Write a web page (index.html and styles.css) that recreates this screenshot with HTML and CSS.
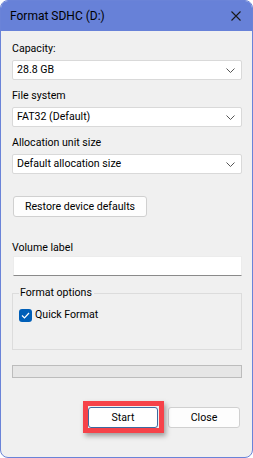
FILE: index.html
```html
<!DOCTYPE html>
<html>
<head>
<meta charset="utf-8">
<link rel="stylesheet" href="styles.css">
</head>
<body>
<div class="window">
  <div class="titlebar">
    <span class="title">Format SDHC (D:)</span>
    <svg class="close-x" width="10" height="10" viewBox="0 0 10 10"><path d="M0.5 0.5 L9.5 9.5 M9.5 0.5 L0.5 9.5" stroke="#1a1a1a" stroke-width="1.1" fill="none"/></svg>
  </div>
  <div class="content">
    <div class="label">Capacity:</div>
    <div class="combo"><span>28.8 GB</span><svg class="chev" width="9" height="5" viewBox="0 0 9 5"><path d="M0.5 0.5 L4.5 4.5 L8.5 0.5" stroke="#555" stroke-width="1" fill="none"/></svg></div>
    <div class="label gap">File system</div>
    <div class="combo"><span>FAT32 (Default)</span><svg class="chev" width="9" height="5" viewBox="0 0 9 5"><path d="M0.5 0.5 L4.5 4.5 L8.5 0.5" stroke="#555" stroke-width="1" fill="none"/></svg></div>
    <div class="label gap">Allocation unit size</div>
    <div class="combo"><span>Default allocation size</span><svg class="chev" width="9" height="5" viewBox="0 0 9 5"><path d="M0.5 0.5 L4.5 4.5 L8.5 0.5" stroke="#555" stroke-width="1" fill="none"/></svg></div>
    <div class="row"><button class="btn restore">Restore device defaults</button></div>
    <div class="label vol">Volume label</div>
    <div class="input"></div>
    <fieldset class="group">
      <legend>Format options</legend>
      <label class="check"><span class="box"><svg width="9" height="7" viewBox="0 0 9 7"><path d="M1 3.5 L3.5 6 L8 1" stroke="#fff" stroke-width="1.2" fill="none"/></svg></span>Quick Format</label>
    </fieldset>
    <div class="progress"></div>
    <div class="actions">
      <div class="hl-wrap"><button class="btn start">Start</button><div class="highlight"></div></div>
      <button class="btn close">Close</button>
    </div>
  </div>
</div>
</body>
</html>
```
FILE: styles.css
```css
* { box-sizing: border-box; }
html, body { margin: 0; padding: 0; background: #ffffff; }
body {
  font-family: Roboto, "Noto Sans", "Liberation Sans", sans-serif;
  font-size: 10.6px;
  color: #000;
}
.window {
  width: 253px;
  height: 458px;
  border: 1px solid #6a83d8;
  border-radius: 8px;
  overflow: hidden;
  background: #f0f0f0;
  display: flex;
  flex-direction: column;
}
.titlebar {
  height: 30px;
  background: #6781d8;
  display: flex;
  align-items: center;
  justify-content: space-between;
  padding: 0 11px 0 9px;
  flex: none;
}
.title { font-size: 12px; color: #000; line-height: 16px; margin-top: -1px; }
.close-x { display: block; margin-top: -1px; }
.content {
  padding: 8px 10px 0 11px;
  display: flex;
  flex-direction: column;
  flex: 1;
}
.label { line-height: 16px; height: 18px; padding-top: 2px; margin-bottom: 3px; }
.label.gap { margin-top: 6px; }
.label.vol { margin-top: 21px; margin-bottom: 0; }
.combo {
  height: 20px;
  background: #fff;
  border: 1px solid #d9d9d9;
  border-radius: 2px;
  display: flex;
  align-items: center;
  justify-content: space-between;
  padding: 0 6px 0 4px;
  line-height: 16px;
}
.chev { display: block; }
.row { display: flex; margin-top: 22px; }
.btn {
  font-family: inherit;
  font-size: 10.6px;
  color: #000;
  background: #fdfdfd;
  border: 1px solid #d0d0d0;
  border-radius: 3px;
  padding: 0;
  height: 21px;
  line-height: 16px;
}
.restore { margin-left: 1px; width: 134px; }
.input {
  margin-left: 1px;
  height: 20px;
  background: #fff;
  border: 1px solid #ececec;
  border-bottom: 1px solid #8a8a8a;
}
.group {
  margin: 10px 0 0 0;
  padding: 0 0 0 6px;
  height: 64px;
  border: 1px solid #dcdcdc;
  border-radius: 0;
}
.group legend {
  padding: 0 2px 0 1px;
  margin-left: 0;
  line-height: 14px;
}
.check { display: flex; align-items: center; line-height: 16px; margin-top: 7px; }
.box {
  width: 13px;
  height: 13px;
  background: #005fb8;
  border-radius: 3px;
  display: flex;
  align-items: center;
  justify-content: center;
  margin-right: 3px;
}
.box svg { display: block; }
.progress {
  margin-top: 15px;
  height: 13px;
  background: #e6e6e6;
  border: 1px solid #bcbcbc;
}
.actions {
  display: flex;
  justify-content: flex-end;
  gap: 10px;
  margin-top: 29px;
  padding-right: 2px;
}
.hl-wrap { position: relative; }
.start {
  width: 70px;
  background: #fff;
  border: 1px solid #3d6aa0;
  display: block;
}
.close { width: 72px; }
.highlight {
  position: absolute;
  left: -5px;
  top: -6px;
  right: -6px;
  bottom: -5px;
  border: 5px solid #f64249;
  box-shadow: 2px 3px 5px rgba(0,0,0,0.35);
  pointer-events: none;
}
```
